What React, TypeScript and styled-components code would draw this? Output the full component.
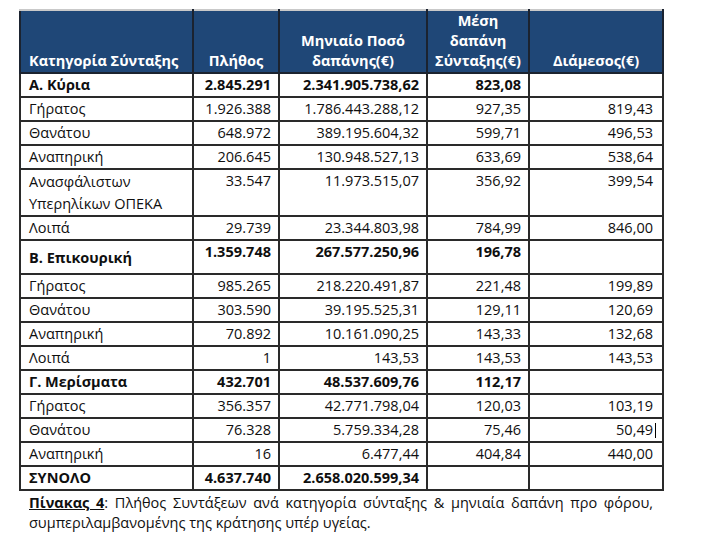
import styled, { createGlobalStyle } from "styled-components";

const GlobalStyle = createGlobalStyle`
    body {
        margin: 0;
        background: #ffffff;
        font-family: "Open Sans", "DejaVu Sans", sans-serif;
    }
`;

const Page = styled.div`
    width: 711px;
    height: 547px;
    padding: 9px 0 0 19px;
    box-sizing: border-box;
    color: #0f0f0f;
`;

const Table = styled.table`
    border-collapse: collapse;
    table-layout: fixed;
    width: 645px;
    font-size: 14.5px;
`;

const Col = styled.col<{ $w: number }>`
    width: ${(p) => p.$w}px;
`;

const HeadRow = styled.tr`
    height: 61px;
`;

const HeadCell = styled.th<{ $left?: boolean }>`
    background: #1f4777;
    color: #ffffff;
    font-weight: 700;
    line-height: 20px;
    vertical-align: bottom;
    text-align: ${(p) => (p.$left ? "left" : "center")};
    padding: 0 6px 1px ${(p) => (p.$left ? "8px" : "6px")};
    border: 2px solid #1b2330;
    border-top: 2px solid #c9c9c9;
`;

const Row = styled.tr<{ $tall?: boolean }>`
    height: ${(p) => (p.$tall ? "34px" : "24px")};
`;

const Cell = styled.td<{ $bold?: boolean; $label?: boolean; $middle?: boolean; $last?: boolean }>`
    border: 2px solid #2a2a2a;
    line-height: 20px;
    padding: 1px ${(p) => (p.$last ? "9px" : "7px")} 0 8px;
    font-weight: ${(p) => (p.$bold ? 700 : 400)};
    text-align: ${(p) => (p.$label ? "left" : "right")};
    vertical-align: ${(p) => (p.$middle ? "middle" : "top")};
    white-space: nowrap;
`;

const LabelLine = styled.div<{ $multi?: boolean }>`
    line-height: ${(p) => (p.$multi ? "22px" : "20px")};
`;

const Caret = styled.span`
    display: inline-block;
    width: 1px;
    height: 15px;
    margin-left: 2px;
    margin-right: -3px;
    background: #000;
    vertical-align: -3px;
`;

const Caption = styled.p`
    width: 624px;
    margin: 2px 0 0 10px;
    font-size: 14.5px;
    line-height: 20px;
    text-align: justify;
    color: #101010;
`;

const CaptionLabel = styled.span`
    font-weight: 700;
    text-decoration: underline;
`;

type Line = {
    label: string[];
    n: string;
    sum: string;
    avg: string;
    med: string;
    bold?: boolean;
    tall?: boolean;
    caret?: boolean;
};

const rows: Line[] = [
    { label: ["Α. Κύρια"], n: "2.845.291", sum: "2.341.905.738,62", avg: "823,08", med: "", bold: true },
    { label: ["Γήρατος"], n: "1.926.388", sum: "1.786.443.288,12", avg: "927,35", med: "819,43" },
    { label: ["Θανάτου"], n: "648.972", sum: "389.195.604,32", avg: "599,71", med: "496,53" },
    { label: ["Αναπηρική"], n: "206.645", sum: "130.948.527,13", avg: "633,69", med: "538,64" },
    { label: ["Ανασφάλιστων", "Υπερηλίκων ΟΠΕΚΑ"], n: "33.547", sum: "11.973.515,07", avg: "356,92", med: "399,54" },
    { label: ["Λοιπά"], n: "29.739", sum: "23.344.803,98", avg: "784,99", med: "846,00" },
    { label: ["Β. Επικουρική"], n: "1.359.748", sum: "267.577.250,96", avg: "196,78", med: "", bold: true, tall: true },
    { label: ["Γήρατος"], n: "985.265", sum: "218.220.491,87", avg: "221,48", med: "199,89" },
    { label: ["Θανάτου"], n: "303.590", sum: "39.195.525,31", avg: "129,11", med: "120,69" },
    { label: ["Αναπηρική"], n: "70.892", sum: "10.161.090,25", avg: "143,33", med: "132,68" },
    { label: ["Λοιπά"], n: "1", sum: "143,53", avg: "143,53", med: "143,53" },
    { label: ["Γ. Μερίσματα"], n: "432.701", sum: "48.537.609,76", avg: "112,17", med: "", bold: true },
    { label: ["Γήρατος"], n: "356.357", sum: "42.771.798,04", avg: "120,03", med: "103,19" },
    { label: ["Θανάτου"], n: "76.328", sum: "5.759.334,28", avg: "75,46", med: "50,49", caret: true },
    { label: ["Αναπηρική"], n: "16", sum: "6.477,44", avg: "404,84", med: "440,00" },
    { label: ["ΣΥΝΟΛΟ"], n: "4.637.740", sum: "2.658.020.599,34", avg: "", med: "", bold: true },
];

function App() {
    return (
        <Page>
            <GlobalStyle />
            <Table>
                <colgroup>
                    <Col $w={173} />
                    <Col $w={86} />
                    <Col $w={148} />
                    <Col $w={102} />
                    <Col $w={134} />
                </colgroup>
                <thead>
                    <HeadRow>
                        <HeadCell $left>Κατηγορία Σύνταξης</HeadCell>
                        <HeadCell>Πλήθος</HeadCell>
                        <HeadCell>Μηνιαίο Ποσό<br />δαπάνης(€)</HeadCell>
                        <HeadCell>Μέση<br />δαπάνη<br />Σύνταξης(€)</HeadCell>
                        <HeadCell>Διάμεσος(€)</HeadCell>
                    </HeadRow>
                </thead>
                <tbody>
                    {rows.map((r, i) => (
                        <Row key={i} $tall={r.tall}>
                            <Cell $label $bold={r.bold} $middle={r.tall}>
                                {r.label.map((l, j) => (
                                    <LabelLine key={j} $multi={r.label.length > 1}>
                                        {l}
                                    </LabelLine>
                                ))}
                            </Cell>
                            <Cell $bold={r.bold}>{r.n}</Cell>
                            <Cell $bold={r.bold}>{r.sum}</Cell>
                            <Cell $bold={r.bold}>{r.avg}</Cell>
                            <Cell $bold={r.bold} $last>
                                {r.med}
                                {r.caret && <Caret />}
                            </Cell>
                        </Row>
                    ))}
                </tbody>
            </Table>
            <Caption>
                <CaptionLabel>Πίνακας 4</CaptionLabel>: Πλήθος Συντάξεων ανά κατηγορία σύνταξης &amp; μηνιαία
                δαπάνη προ φόρου, συμπεριλαμβανομένης της κράτησης υπέρ υγείας.
            </Caption>
        </Page>
    );
}

export default App;
